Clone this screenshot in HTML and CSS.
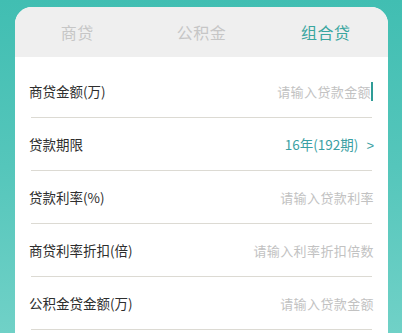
FILE: index.html
```html
<!DOCTYPE html>
<html lang="zh-CN">
<head>
<meta charset="utf-8">
<link rel="stylesheet" href="styles.css">
</head>
<body>
<div class="page">
  <div class="card">
    <div class="tabs">
      <div class="tab">商贷</div>
      <div class="tab">公积金</div>
      <div class="tab active">组合贷</div>
    </div>
    <div class="form">
      <div class="row">
        <span class="label">商贷金额(万)</span>
        <span class="placeholder focused">请输入贷款金额</span>
      </div>
      <div class="divider"></div>
      <div class="row">
        <span class="label">贷款期限</span>
        <span class="value">16年(192期)<span class="arrow">&gt;</span></span>
      </div>
      <div class="divider"></div>
      <div class="row">
        <span class="label">贷款利率(%)</span>
        <span class="placeholder">请输入贷款利率</span>
      </div>
      <div class="divider"></div>
      <div class="row">
        <span class="label">商贷利率折扣(倍)</span>
        <span class="placeholder">请输入利率折扣倍数</span>
      </div>
      <div class="divider"></div>
      <div class="row">
        <span class="label">公积金贷金额(万)</span>
        <span class="placeholder">请输入贷款金额</span>
      </div>
      <div class="divider"></div>
    </div>
  </div>
</div>
</body>
</html>
```

FILE: styles.css
```css
html, body {
  margin: 0;
  padding: 0;
}
body {
  width: 402px;
  height: 333px;
  overflow: hidden;
  background: linear-gradient(180deg, #41beb2 0%, #55c6bb 50%, #70d1c7 100%);
  font-family: "Noto Sans CJK SC", "Noto Sans", sans-serif;
}
.page {
  padding: 7px 14px 0 15px;
}
.card {
  background: #ffffff;
  border-radius: 17px 17px 0 0;
  overflow: hidden;
  height: 340px;
}
.tabs {
  display: grid;
  grid-template-columns: 1fr 1fr 1fr;
  height: 50px;
  background: #efefef;
  align-items: center;
}
.tab {
  text-align: center;
  font-size: 16px;
  color: #c6c6c6;
  line-height: 50px;
  letter-spacing: 0.5px;
}
.tab.active {
  color: #3aa6a0;
}
.form {
  padding-top: 8px;
}
.row {
  height: 52px;
  display: flex;
  align-items: center;
  justify-content: space-between;
  padding: 0 14px 0 14px;
}
.label {
  font-size: 13.5px;
  color: #2e2e2e;
}
.placeholder {
  font-size: 13px;
  letter-spacing: 0.4px;
  color: #c2c2c2;
}
.placeholder.focused {
  border-right: 2px solid #2f9c97;
  padding-right: 0;
  margin-right: 1px;
  line-height: 19px;
}
.value {
  font-size: 13.5px;
  color: #3a9fa3;
}
.arrow {
  margin-left: 8px;
  font-family: "Liberation Sans", sans-serif;
  font-size: 13px;
}
.divider {
  height: 1px;
  background: #dcdad3;
  margin: 0 16px;
}
```
